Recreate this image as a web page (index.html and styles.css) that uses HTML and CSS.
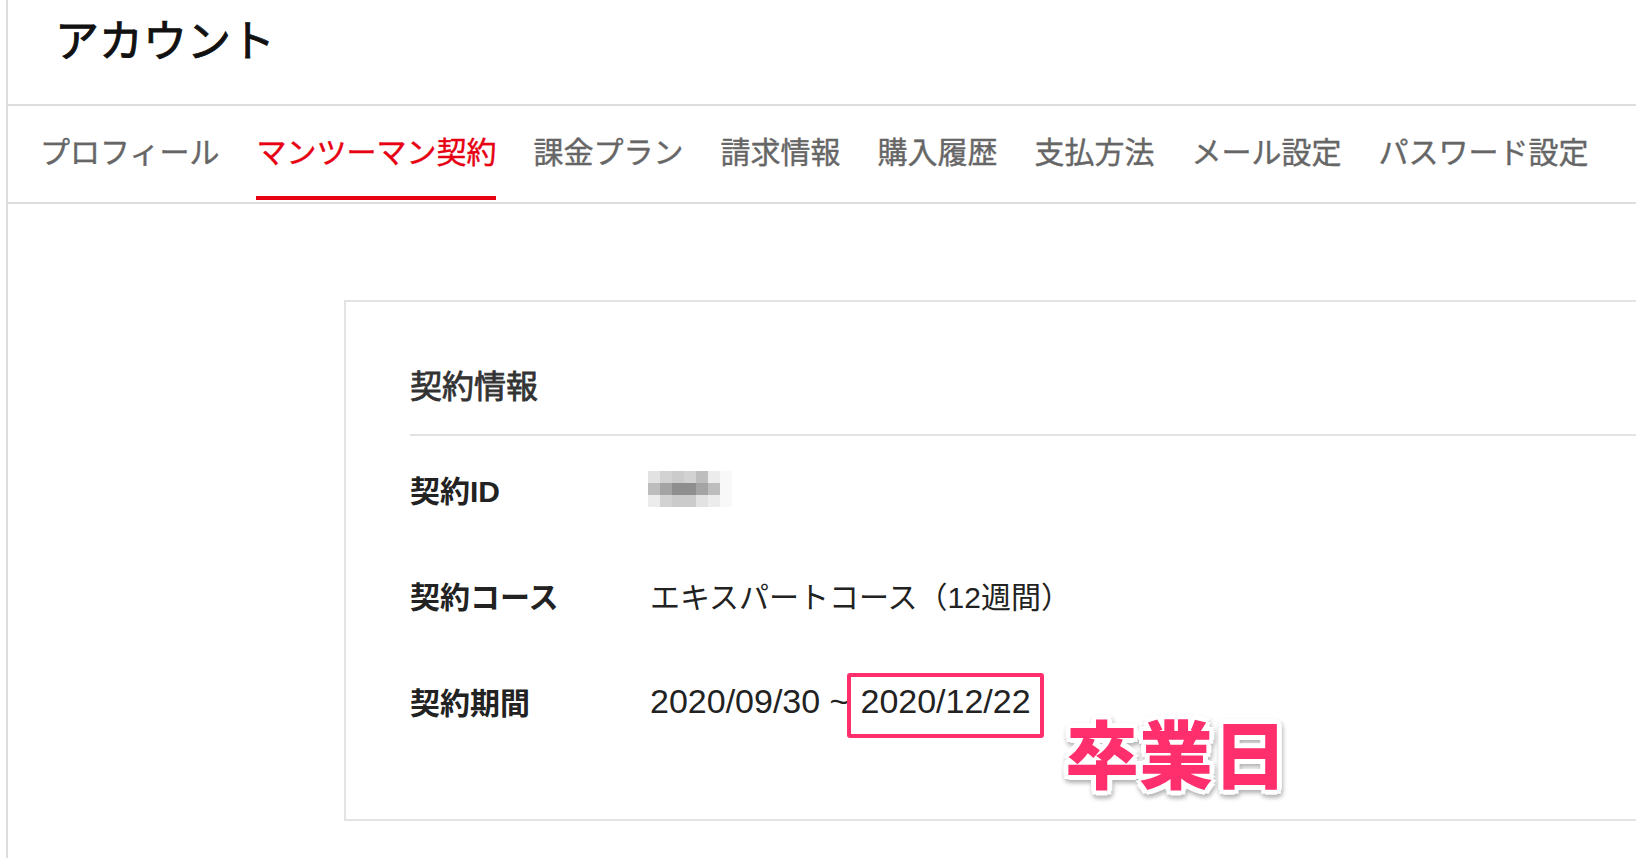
FILE: index.html
```html
<!DOCTYPE html>
<html lang="ja">
<head>
<meta charset="utf-8">
<title>アカウント</title>
<link rel="stylesheet" href="styles.css">
</head>
<body>
<div class="page">
  <header class="header">
    <h1 class="title">アカウント</h1>
  </header>
  <nav class="tabs">
    <a class="tab">プロフィール</a>
    <a class="tab active">マンツーマン契約</a>
    <a class="tab">課金プラン</a>
    <a class="tab">請求情報</a>
    <a class="tab">購入履歴</a>
    <a class="tab">支払方法</a>
    <a class="tab">メール設定</a>
    <a class="tab">パスワード設定</a>
  </nav>
  <main class="content">
    <section class="card">
      <h2 class="card-title">契約情報</h2>
      <div class="rows">
        <div class="row">
          <div class="label">契約ID</div>
          <div class="value">
            <div class="mosaic" aria-label="(非表示)">
              <i class="m1"></i><i class="m2"></i><i class="m3"></i><i class="m2"></i><i class="m4"></i><i class="m5"></i><i class="m6"></i>
              <i class="m4"></i><i class="m7"></i><i class="m8"></i><i class="m8"></i><i class="m7"></i><i class="m4"></i><i class="m6"></i>
              <i class="m5"></i><i class="m2"></i><i class="m3"></i><i class="m3"></i><i class="m1"></i><i class="m5"></i><i class="m6"></i>
            </div>
          </div>
        </div>
        <div class="row">
          <div class="label">契約コース</div>
          <div class="value">エキスパートコース（12週間）</div>
        </div>
        <div class="row">
          <div class="label">契約期間</div>
          <div class="value dates">
            <span class="date">2020/09/30 ~</span><span class="date boxed">2020/12/22</span>
          </div>
        </div>
      </div>
      <div class="note">卒業日</div>
    </section>
  </main>
</div>
</body>
</html>
```

FILE: styles.css
```css
html, body {
  margin: 0;
  padding: 0;
  background: #ffffff;
}
body {
  overflow: hidden;
  font-family: "Liberation Sans", "Noto Sans CJK JP", sans-serif;
  color: #222222;
}
.page {
  margin-left: 6px;
  border-left: 2px solid #dddddd;
  min-height: 858px;
}
.header {
  height: 104px;
  border-bottom: 2px solid #dddddd;
  box-sizing: content-box;
}
.title {
  margin: 0;
  padding: 10px 0 0 47px;
  font-family: "Noto Sans CJK JP", sans-serif;
  font-size: 44px;
  line-height: 56px;
  font-weight: 400;
  -webkit-text-stroke: 0.9px #111111;
  color: #111111;
}
.tabs {
  display: flex;
  gap: 37px;
  height: 96px;
  padding-left: 32px;
  border-bottom: 2px solid #dddddd;
}
.tab {
  display: block;
  padding-top: 22px;
  height: 45px;
  padding-bottom: 23px;
  border-bottom: 4px solid transparent;
  font-family: "Noto Sans CJK JP", sans-serif;
  font-size: 30px;
  line-height: 45px;
  font-weight: 400;
  -webkit-text-stroke: 0.4px currentColor;
  color: #666666;
  white-space: nowrap;
}
.tab.active {
  color: #e60012;
  border-bottom-color: #e60012;
}
.content {
  padding: 96px 0 0 336px;
}
.card {
  position: relative;
  width: 1400px;
  border: 2px solid #e3e3e3;
  padding: 58px 0 65px 64px;
  box-sizing: border-box;
}
.card-title {
  margin: 0 0 26px 0;
  font-family: "Noto Sans CJK JP", sans-serif;
  font-size: 32px;
  line-height: 48px;
  font-weight: 400;
  -webkit-text-stroke: 0.8px #333333;
  color: #333333;
}
.rows {
  border-top: 2px solid #e3e3e3;
}
.row {
  display: flex;
  align-items: center;
  height: 106px;
}
.label {
  width: 240px;
  flex: none;
  font-family: "Liberation Sans", "Noto Sans CJK JP", sans-serif;
  font-size: 30px;
  font-weight: 700;
  color: #222222;
}
.value {
  font-family: "Liberation Sans", "Noto Sans CJK JP", sans-serif;
  font-size: 30px;
  color: #222222;
}
.mosaic {
  display: grid;
  grid-template-columns: repeat(7, 12px);
  grid-auto-rows: 12px;
  margin-left: -2px;
}
.mosaic i { display: block; }
.m1 { background: #e2e2e2; }
.m2 { background: #d2d2d2; }
.m3 { background: #cbcbcb; }
.m4 { background: #bdbdbd; }
.m5 { background: #ececec; }
.m6 { background: #f8f8f8; }
.m7 { background: #a4a4a4; }
.m8 { background: #8e8e8e; }
.dates {
  display: flex;
  align-items: baseline;
  margin-top: 9px;
}
.date {
  font-family: "Liberation Sans", sans-serif;
  font-size: 34px;
  line-height: 49px;
  color: #222222;
}
.boxed {
  border: 4px solid #ff2f6d;
  border-radius: 3px;
  padding: 0 9px 8px 9px;
  margin-left: -2px;
}
.note {
  position: absolute;
  left: 719px;
  top: 412px;
  font-family: "Noto Sans CJK JP", sans-serif;
  font-size: 74px;
  line-height: 1;
  font-weight: 900;
  color: #ff2f6d;
  text-shadow:
    3px 0 0 #fff, -3px 0 0 #fff, 0 3px 0 #fff, 0 -3px 0 #fff,
    2px 2px 0 #fff, -2px 2px 0 #fff, 2px -2px 0 #fff, -2px -2px 0 #fff,
    5px 0 0 #fff, -5px 0 0 #fff, 0 5px 0 #fff, 0 -5px 0 #fff,
    4px 4px 0 #fff, -4px 4px 0 #fff, 4px -4px 0 #fff, -4px -4px 0 #fff;
  filter: drop-shadow(1px 3px 2px rgba(0, 0, 0, 0.3));
}
```
